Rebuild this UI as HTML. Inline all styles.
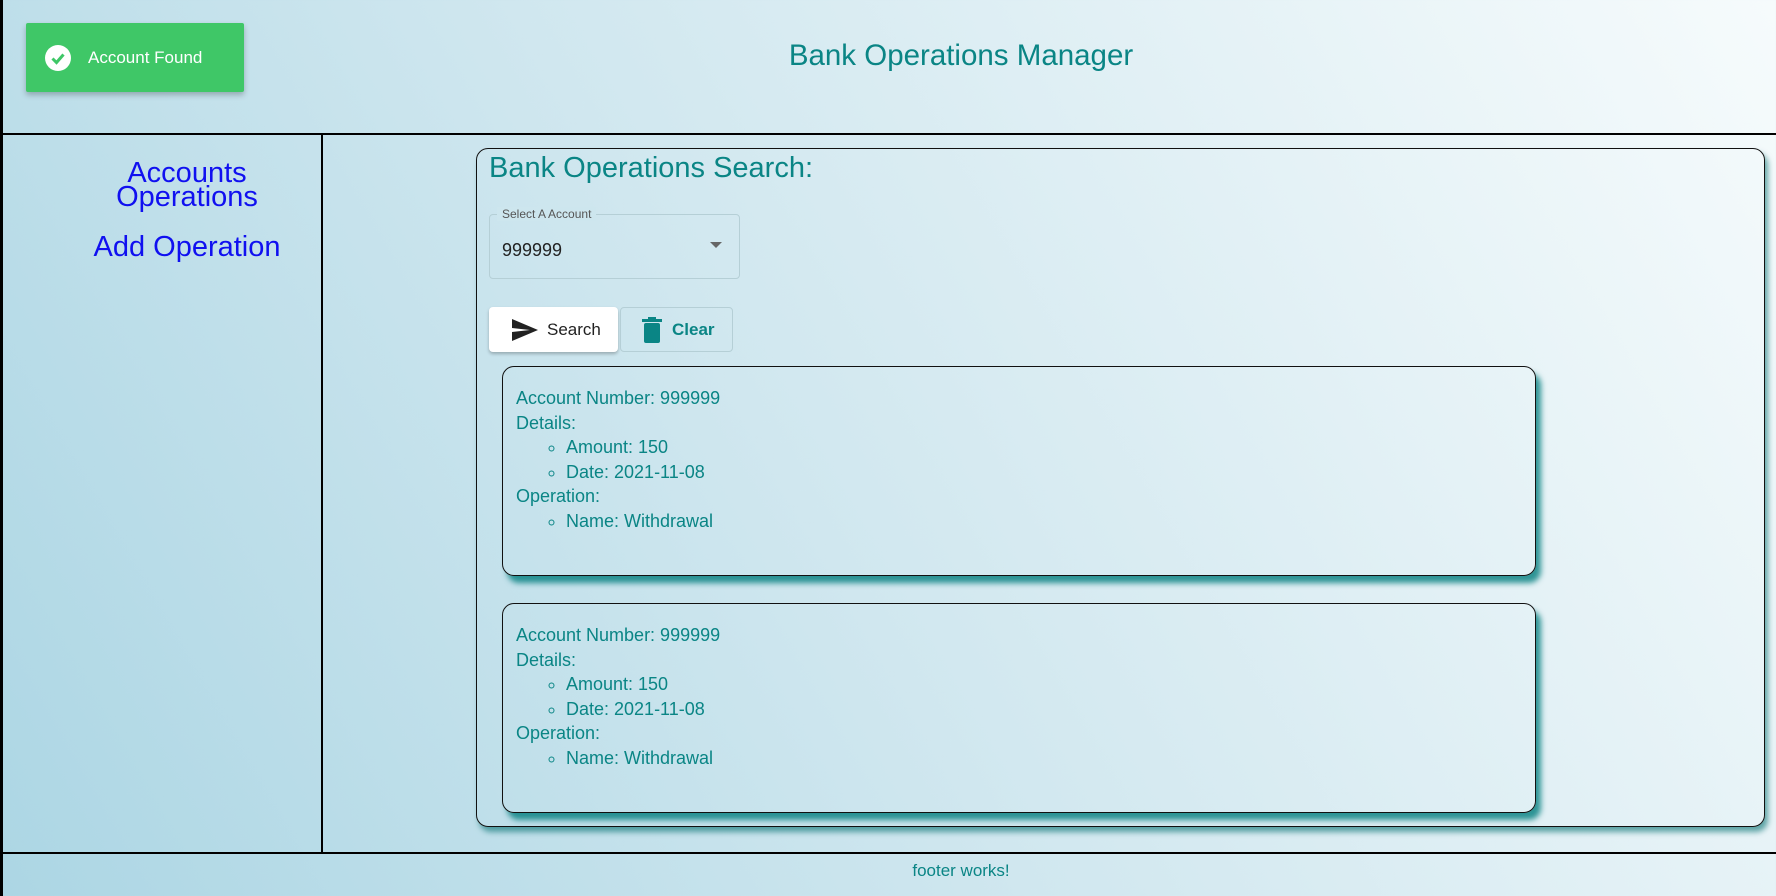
<!DOCTYPE html>
<html><head><style>
*{box-sizing:border-box;margin:0;padding:0}
body{width:1776px;height:896px;overflow:hidden;font-family:"Liberation Sans",sans-serif;background:linear-gradient(60deg,#acd6e4 0%,#d0e7ef 45%,#f6fbfc 100%);position:relative;color:#0a8585}
.abs{position:absolute}
.line{position:absolute;background:#000}
.toast{left:26px;top:23px;width:218px;height:69px;background:#3fc767;box-shadow:0 3px 6px rgba(0,0,0,.25);color:#fff;font-size:17px;display:flex;align-items:center;border-radius:2px}
.title{left:0;width:1922px;text-align:center;top:39px;font-size:29.5px;color:#0a8585}
.nav{left:60px;width:254px;text-align:center;color:#1010f0;font-size:29px;line-height:24px}
.card{left:476px;top:148px;width:1289px;height:679px;border:1.5px solid #111;border-radius:12px;box-shadow:3px 5px 6px rgba(0,110,110,.6)}
.rc{left:502px;width:1034px;height:210px;border:1.5px solid #111;border-radius:12px;box-shadow:5px 7px 6px rgba(0,125,125,.8);font-size:18px;padding:19px 0 0 13px;line-height:24.6px}
ul{list-style:circle;padding-left:50px}
</style></head><body>
<div class="line" style="left:0;top:0;width:3px;height:896px"></div>
<div class="line" style="left:0;top:133px;width:1776px;height:2px"></div>
<div class="line" style="left:321px;top:134px;width:2px;height:720px"></div>
<div class="line" style="left:0;top:852px;width:1776px;height:2px"></div>

<div class="abs toast"><svg style="margin:0 16px 0 18px" width="28" height="28" viewBox="0 0 28 28"><circle cx="14" cy="14" r="13" fill="#fff"/><path d="M8.5 14.5l4 4 7-8" stroke="#3fc767" stroke-width="3" fill="none"/></svg>Account Found</div>
<div class="abs title">Bank Operations Manager</div>

<div class="abs nav" style="top:161px">Accounts<br>Operations</div>
<div class="abs nav" style="top:235px">Add Operation</div>

<div class="abs card"></div>
<div class="abs" style="left:489px;top:152px;font-size:29px;color:#0a8585">Bank Operations Search:</div>
<div class="abs" style="left:489px;top:214px;width:251px;height:65px;border:1px solid #b5cfd6;border-radius:4px"></div>
<div class="abs" style="left:497px;top:207px;font-size:12px;color:#555;padding:0 5px;background:#cde6ee">Select A Account</div>
<div class="abs" style="left:502px;top:240px;font-size:18px;color:#222">999999</div>
<div class="abs" style="left:710px;top:242px;width:0;height:0;border-left:6px solid transparent;border-right:6px solid transparent;border-top:6px solid #666"></div>

<div class="abs" style="left:489px;top:307px;width:129px;height:45px;background:#fff;border-radius:4px;box-shadow:0 2px 3px rgba(0,0,0,.25);display:flex;align-items:center;font-size:17px;color:#222"><svg style="margin:0 8px 0 22px" width="28" height="24" viewBox="0 0 28 24"><path d="M1 1L27 12 1 23 1 14 19 12 1 10z" fill="#222"/></svg>Search</div>
<div class="abs" style="left:620px;top:307px;width:113px;height:45px;border:1px solid #b5cfd6;border-radius:4px;display:flex;align-items:center;font-size:17px;font-weight:bold;color:#0a8585"><svg style="margin:0 10px 0 21px" width="20" height="26" viewBox="0 0 20 26"><rect x="2" y="6" width="16" height="20" rx="2" fill="#0a8585"/><rect x="0" y="2" width="20" height="3" fill="#0a8585"/><rect x="6" y="0" width="8" height="3" fill="#0a8585"/></svg>Clear</div>

<div class="abs rc" style="top:366px">Account Number: 999999<br>Details:<ul><li>Amount: 150</li><li>Date: 2021-11-08</li></ul>Operation:<ul><li>Name: Withdrawal</li></ul></div>
<div class="abs rc" style="top:603px">Account Number: 999999<br>Details:<ul><li>Amount: 150</li><li>Date: 2021-11-08</li></ul>Operation:<ul><li>Name: Withdrawal</li></ul></div>

<div class="abs" style="left:0;width:1922px;text-align:center;top:861px;font-size:17px">footer works!</div>
</body></html>
